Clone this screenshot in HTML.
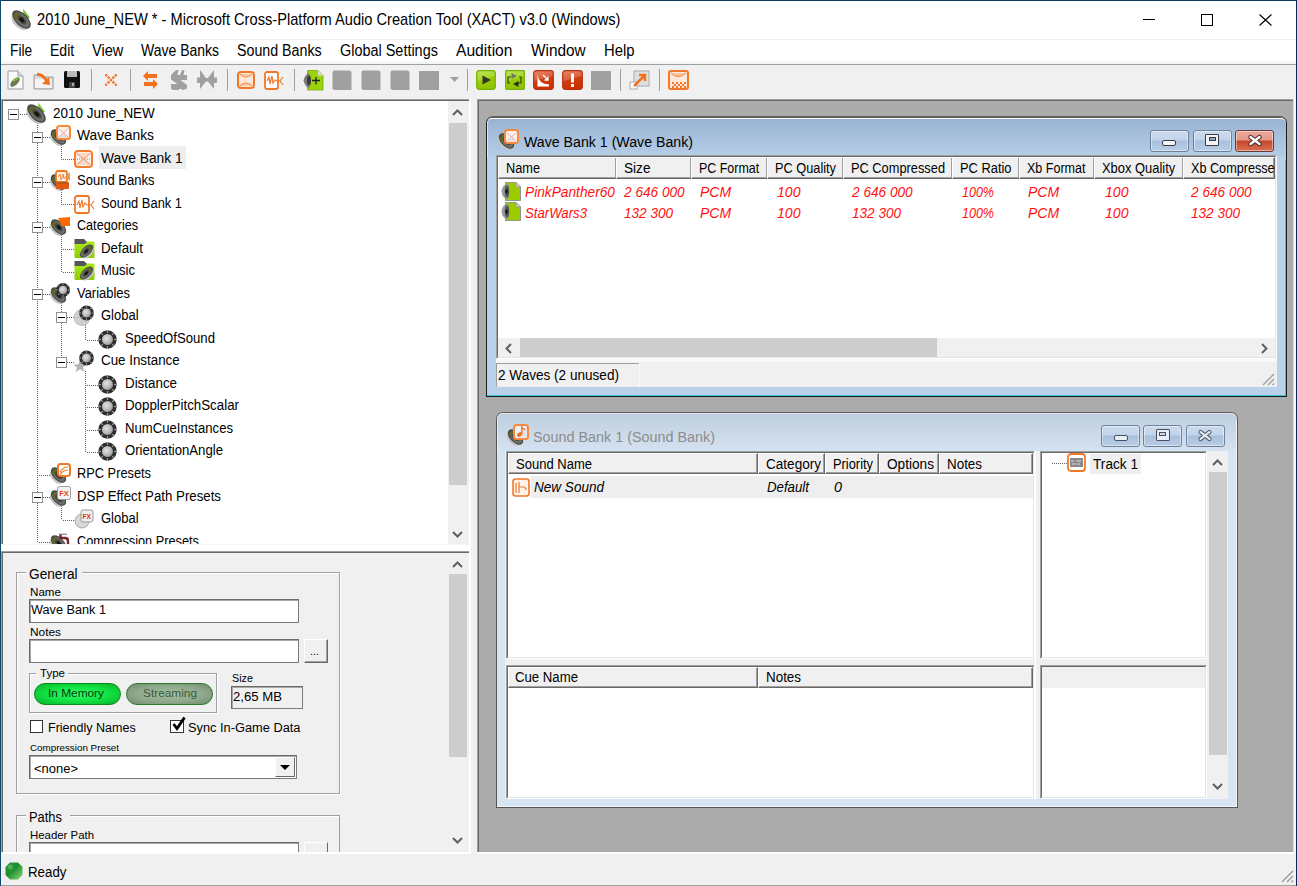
<!DOCTYPE html><html><head><meta charset="utf-8"><style>
*{margin:0;padding:0;box-sizing:border-box}
html,body{width:1297px;height:886px;overflow:hidden;background:#f0f0f0;font-family:"Liberation Sans",sans-serif;color:#000}
.a{position:absolute}
.t{position:absolute;white-space:pre;line-height:1;transform-origin:0 0}
svg{position:absolute;overflow:visible}
</style></head><body><div class="a" style="left:0px;top:0px;width:1297px;height:39px;background:#fff"></div>
<div class="a" style="left:0px;top:39px;width:1297px;height:1px;background:#f0f0f0"></div>
<div class="a" style="left:0px;top:40px;width:1297px;height:21px;background:#fff"></div>
<div class="a" style="left:0px;top:61px;width:1297px;height:3px;background:linear-gradient(#fbfbfb,#f0f0f0)"></div>
<div class="a" style="left:0px;top:64px;width:1297px;height:1px;background:#a0a0a0"></div>
<div class="a" style="left:0px;top:65px;width:1297px;height:34px;background:#f0f0f0"></div>
<div class="a" style="left:0px;top:0px;width:1297px;height:1px;background:#0f3a5e"></div>
<div class="a" style="left:0px;top:0px;width:1px;height:886px;background:#0f4a6e"></div>
<div class="a" style="left:1296px;top:0px;width:1px;height:886px;background:#0a2a5a"></div>
<svg style="left:11px;top:10px" width="20" height="20" viewBox="0 0 20 20" ><path d="M12.0 -1.424999999999999 L19.125 7.775 L12.8 8.925 Z" fill="#78c43a"/><g transform="rotate(-45 10.5 9.5)"><ellipse cx="7.71" cy="9.73" rx="5.89" ry="10.35" fill="#c4c4c4"/><ellipse cx="10.5" cy="9.5" rx="6.2" ry="11.5" fill="#4c4d48"/><ellipse cx="10.5" cy="10.075" rx="4.836" ry="9.200000000000001" fill="#6f706c"/><ellipse cx="9.879999999999999" cy="4.325" rx="3.4100000000000006" ry="3.68" fill="#65662e"/><ellipse cx="10.5" cy="10.075" rx="3.1" ry="5.75" fill="#4a4a46"/><ellipse cx="10.5" cy="10.075" rx="1.7360000000000002" ry="3.22" fill="#151510"/></g></svg>
<div class="t" style="left:36.7px;top:11.03px;font-size:16.2px;color:#000;transform:scaleX(0.9050);">2010 June_NEW * - Microsoft Cross-Platform Audio Creation Tool (XACT) v3.0 (Windows)</div>
<div class="a" style="left:1143px;top:19px;width:12px;height:1px;background:#000"></div>
<div class="a" style="left:1201px;top:14px;width:12px;height:12px;border:1px solid #000"></div>
<svg style="left:1259px;top:14px" width="13" height="12" viewBox="0 0 13 12" ><path d="M0.5 0.5 L12.5 11.5 M12.5 0.5 L0.5 11.5" stroke="#000" stroke-width="1.1" fill="none"/></svg>
<div class="t" style="left:10.2px;top:43.20px;font-size:16px;color:#000;transform:scaleX(0.8572);">File</div>
<div class="t" style="left:50.1px;top:43.20px;font-size:16px;color:#000;transform:scaleX(0.8775);">Edit</div>
<div class="t" style="left:92.1px;top:43.20px;font-size:16px;color:#000;transform:scaleX(0.9101);">View</div>
<div class="t" style="left:141.2px;top:43.20px;font-size:16px;color:#000;transform:scaleX(0.8754);">Wave Banks</div>
<div class="t" style="left:237.2px;top:43.20px;font-size:16px;color:#000;transform:scaleX(0.8898);">Sound Banks</div>
<div class="t" style="left:340.4px;top:43.20px;font-size:16px;color:#000;transform:scaleX(0.9022);">Global Settings</div>
<div class="t" style="left:456.1px;top:43.20px;font-size:16px;color:#000;transform:scaleX(0.9770);">Audition</div>
<div class="t" style="left:531.2px;top:43.20px;font-size:16px;color:#000;transform:scaleX(0.9612);">Window</div>
<div class="t" style="left:603.7px;top:43.20px;font-size:16px;color:#000;transform:scaleX(0.9269);">Help</div>
<svg style="left:7px;top:70px" width="17" height="20" viewBox="0 0 17 20" ><path d="M1 1 L11 1 L16 6 L16 19 L1 19 Z" fill="#fafafa" stroke="#9a9a9a"/><path d="M11 1 L11 6 L16 6" fill="#ddd" stroke="#9a9a9a"/><ellipse cx="8" cy="12" rx="3" ry="6" transform="rotate(45 8 12)" fill="#6a7a5a"/><path d="M6 11 L11 8" stroke="#7cc43a" stroke-width="2"/></svg>
<svg style="left:33px;top:70px" width="21" height="20" viewBox="0 0 21 20" ><path d="M1 5 L9 5 L11 7 L20 7 L20 19 L1 19 Z" fill="#ddd" stroke="#888" stroke-width="0.8"/><path d="M2 9 L19 9 L19 18 L2 18 Z" fill="#f4f4f4"/><path d="M4 3 Q10 2 14 9 L16 7 L17 15 L9 14 L12 11 Q9 6 4 6 Z" fill="#f07020"/></svg>
<svg style="left:63px;top:70px" width="18" height="19" viewBox="0 0 18 19" ><rect x="1" y="1" width="16" height="17" rx="1.5" fill="#111"/><rect x="4" y="1" width="10" height="6" fill="#bbb"/><rect x="6" y="12" width="6" height="6" fill="#444"/><rect x="9" y="13" width="2" height="3" fill="#aaa"/></svg>
<div class="a" style="left:91px;top:69px;width:1px;height:22px;background:#a0a0a0"></div>
<div class="a" style="left:130px;top:69px;width:1px;height:22px;background:#a0a0a0"></div>
<div class="a" style="left:227px;top:69px;width:1px;height:22px;background:#a0a0a0"></div>
<div class="a" style="left:294px;top:69px;width:1px;height:22px;background:#a0a0a0"></div>
<div class="a" style="left:467px;top:69px;width:1px;height:22px;background:#a0a0a0"></div>
<div class="a" style="left:620px;top:69px;width:1px;height:22px;background:#a0a0a0"></div>
<div class="a" style="left:659px;top:69px;width:1px;height:22px;background:#a0a0a0"></div>
<svg style="left:104px;top:73px" width="14" height="14" viewBox="0 0 14 14" ><path d="M1.5 1.5 L12.5 12.5 M12.5 1.5 L1.5 12.5" stroke="#f07020" stroke-width="2.4" stroke-dasharray="2.2 1.2"/></svg>
<svg style="left:142px;top:70px" width="17" height="20" viewBox="0 0 17 20" ><path d="M1 6 L6 1 L6 4 L15 4 L15 8 L6 8 L6 11 Z" fill="#f07020"/><path d="M16 14 L11 9 L11 12 L2 12 L2 16 L11 16 L11 19 Z" fill="#f07020"/></svg>
<svg style="left:171px;top:70px" width="16" height="20" viewBox="0 0 16 20" ><path d="M0 5 L5 0 L7.5 0 L6.5 5 L9 5 L11 0 L13.5 0.5 L12.5 5 L16 5 L16 10 L9.5 10 L16 15 L16 18.5 L12 20 L9 18.5 L7.5 20 L1.5 20 L0 18.5 L0 14 L6.5 14 L0 9.5 Z" fill="#a0a0a0"/></svg>
<svg style="left:197px;top:70px" width="20" height="19" viewBox="0 0 20 19" ><path d="M3 0 L9 8 L11 8 L17 0 L17 7.5 L20 7.5 L20 13 L17 13 L17 19 L11 11.5 L9 11.5 L3 19 L3 13 L0 13 L0 7.5 L3 7.5 Z" fill="#a0a0a0"/></svg>
<svg style="left:237px;top:71px" width="18" height="18" viewBox="0 0 18 18" ><rect x="1" y="1" width="16" height="16" rx="3" fill="#fde7d8" stroke="#f07828" stroke-width="2"/><path d="M3 3 Q9 9 15 3 M3 15 Q9 9 15 15" stroke="#f3a070" stroke-width="1.2" fill="#f8c8a8"/></svg>
<svg style="left:264px;top:71px" width="21" height="19" viewBox="0 0 21 19" ><rect x="1" y="1" width="13" height="17" rx="2" fill="#fff" stroke="#f07828" stroke-width="1.8"/><path d="M3 10 L5 6 L6 13 L8 5 L9 12 L11 9 L14 10 L16 10 M16 10 L19 6 M16 10 L19 14" stroke="#f07828" stroke-width="1.2" fill="none"/></svg>
<svg style="left:303px;top:70px" width="21" height="21" viewBox="0 0 21 21" ><path d="M4.5 0.5 L15 0.5 L20 5.5 L20 20 L4.5 20 Z" fill="#9bd40c" stroke="#7aa80a" stroke-width="0.8"/><path d="M15 0.5 L15 5.5 L20 5.5 Z" fill="#dcdcdc"/><path d="M0.5 10.5 Q2 4 6.5 3 L6.5 18 Q2 17 0.5 10.5 Z" fill="#7a7a7a"/><ellipse cx="6" cy="10.5" rx="2" ry="5" fill="#3a3a3a"/><path d="M9 10.5 L17 10.5 M13 7 L13 14.5" stroke="#222" stroke-width="1.3"/></svg>
<svg style="left:332px;top:70px" width="20" height="20" viewBox="0 0 20 20" ><path d="M1.5 0.5 L18 0.5 L19.5 2 L19.5 20 L2 20 L0.5 18.5 L0.5 2 Z" fill="#a0a0a0"/></svg>
<svg style="left:361px;top:70px" width="20" height="20" viewBox="0 0 20 20" ><path d="M1.5 0.5 L18 0.5 L19.5 2 L19.5 20 L2 20 L0.5 18.5 L0.5 2 Z" fill="#a0a0a0"/></svg>
<svg style="left:390px;top:70px" width="20" height="20" viewBox="0 0 20 20" ><path d="M1.5 0.5 L18 0.5 L19.5 2 L19.5 20 L2 20 L0.5 18.5 L0.5 2 Z" fill="#a0a0a0"/></svg>
<div class="a" style="left:419px;top:71px;width:20px;height:19px;background:#a0a0a0"></div>
<svg style="left:450px;top:77px" width="9" height="5" viewBox="0 0 9 5" ><path d="M0 0 L9 0 L4.5 5 Z" fill="#a0a0a0"/></svg>
<svg style="left:476px;top:70px" width="20" height="20" viewBox="0 0 20 20" ><defs><linearGradient id="gg" x1="0" y1="0" x2="0.3" y2="1"><stop offset="0" stop-color="#bde35a"/><stop offset="0.5" stop-color="#a8d82c"/><stop offset="0.55" stop-color="#98cc08"/><stop offset="1" stop-color="#90c400"/></linearGradient><linearGradient id="rg" x1="0" y1="0" x2="0.3" y2="1"><stop offset="0" stop-color="#e88868"/><stop offset="0.5" stop-color="#dc6040"/><stop offset="0.55" stop-color="#d03c10"/><stop offset="1" stop-color="#cc3300"/></linearGradient></defs><rect x="0.7" y="0.7" width="18.6" height="18.6" rx="2.5" fill="url(#gg)" stroke="#74b000" stroke-width="1.2"/><path d="M6.5 5.5 L15 10 L6.5 14.5 Z" fill="#333822"/></svg>
<svg style="left:505px;top:70px" width="20" height="20" viewBox="0 0 20 20" ><rect x="0.7" y="0.7" width="18.6" height="18.6" rx="0.8" fill="url(#gg)" stroke="#74b000" stroke-width="1.2"/><path d="M5 13 L3 13 L3 7 L6 7 M14 7 L16 7 L16 13 L13 13" stroke="#3a4020" stroke-width="1.2" fill="none"/><path d="M6.5 3 L12 6 L6.5 9 Z" fill="#707858"/><path d="M13.5 11 L8 14 L13.5 17 Z" fill="#2a3018"/></svg>
<svg style="left:533px;top:70px" width="21" height="20" viewBox="0 0 21 20" ><rect x="0.7" y="0.7" width="19.6" height="18.6" rx="2.5" fill="url(#rg)" stroke="#b83010" stroke-width="1.2"/><path d="M4.5 4.5 Q5.5 14 16 14.5 L16 16.5 L4.5 16.5 Z" fill="#fff"/><path d="M10 5 L15 10 M15 6.5 L15 10 L11.5 10" stroke="#fff" stroke-width="1.4" fill="none"/></svg>
<svg style="left:562px;top:70px" width="21" height="20" viewBox="0 0 21 20" ><rect x="0.7" y="0.7" width="19.6" height="18.6" rx="2.5" fill="url(#rg)" stroke="#b83010" stroke-width="1.2"/><rect x="9" y="3.5" width="3" height="9" fill="#fff"/><rect x="9" y="14" width="3" height="3" fill="#fff"/></svg>
<div class="a" style="left:591px;top:71px;width:20px;height:19px;background:#a0a0a0"></div>
<svg style="left:629px;top:70px" width="21" height="20" viewBox="0 0 21 20" ><rect x="5" y="1" width="15" height="15" fill="#e0e0e0" stroke="#aaa"/><rect x="1" y="12" width="7" height="7" fill="#fff" stroke="#aaa"/><path d="M5 16 L16 5 M10 5 L16 5 L16 11" stroke="#f07020" stroke-width="2.5" fill="none"/></svg>
<svg style="left:668px;top:70px" width="21" height="20" viewBox="0 0 21 20" ><rect x="1" y="1" width="19" height="18" rx="2" fill="#fde7d8" stroke="#f07828" stroke-width="2"/><path d="M3 3 Q10 10 18 3" stroke="#f3a070" stroke-width="1.2" fill="#f8c8a8"/><path d="M4 12 h2 v2 h-2z M8 12 h2 v2 h-2z M12 12 h2 v2 h-2z M16 12 h2 v2 h-2z M6 14 h2 v2 h-2z M10 14 h2 v2 h-2z M14 14 h2 v2 h-2z M4 16 h2 v2 h-2z M8 16 h2 v2 h-2z M12 16 h2 v2 h-2z M16 16 h2 v2 h-2z" fill="#f07828"/></svg>
<div class="a" style="left:1px;top:99px;width:470px;height:1px;background:#a0a0a0"></div>
<div class="a" style="left:1px;top:99px;width:1px;height:445px;background:#a0a0a0"></div>
<div class="a" style="left:2px;top:100px;width:469px;height:1px;background:#696969"></div>
<div class="a" style="left:2px;top:100px;width:1px;height:444px;background:#696969"></div>
<div class="a" style="left:3px;top:101px;width:445px;height:444px;background:#fff"></div>
<div class="a" style="left:448px;top:101px;width:21px;height:443px;background:#f0f0f0"></div>
<div class="a" style="left:449px;top:123px;width:18px;height:362px;background:#cdcdcd"></div>
<svg style="left:452px;top:109px" width="11" height="7" viewBox="0 0 11 7" ><path d="M1 6 L5.5 1.5 L10 6" stroke="#606060" stroke-width="2" fill="none"/></svg>
<svg style="left:452px;top:531px" width="11" height="7" viewBox="0 0 11 7" ><path d="M1 1 L5.5 5.5 L10 1" stroke="#606060" stroke-width="2" fill="none"/></svg>
<div class="a" style="left:469px;top:99px;width:2px;height:447px;background:#fff"></div>
<div class="a" style="left:1px;top:544px;width:470px;height:7px;background:#fff"></div>
<div class="a" style="left:37px;top:123px;width:1px;height:420px;background:repeating-linear-gradient(#606060 0 1px,transparent 1px 2px)"></div>
<div class="a" style="left:61px;top:145px;width:1px;height:15px;background:repeating-linear-gradient(#606060 0 1px,transparent 1px 2px)"></div>
<div class="a" style="left:61px;top:190px;width:1px;height:15px;background:repeating-linear-gradient(#606060 0 1px,transparent 1px 2px)"></div>
<div class="a" style="left:61px;top:235px;width:1px;height:37px;background:repeating-linear-gradient(#606060 0 1px,transparent 1px 2px)"></div>
<div class="a" style="left:61px;top:303px;width:1px;height:60px;background:repeating-linear-gradient(#606060 0 1px,transparent 1px 2px)"></div>
<div class="a" style="left:61px;top:506px;width:1px;height:14px;background:repeating-linear-gradient(#606060 0 1px,transparent 1px 2px)"></div>
<div class="a" style="left:85px;top:325px;width:1px;height:15px;background:repeating-linear-gradient(#606060 0 1px,transparent 1px 2px)"></div>
<div class="a" style="left:85px;top:371px;width:1px;height:82px;background:repeating-linear-gradient(#606060 0 1px,transparent 1px 2px)"></div>
<div class="a" style="left:20px;top:114px;width:7px;height:1px;background:repeating-linear-gradient(90deg,#606060 0 1px,transparent 1px 2px)"></div>
<div class="a" style="left:8px;top:109px;width:11px;height:11px;border:1px solid #919191;background:#fff"></div>
<div class="a" style="left:10px;top:114px;width:7px;height:1px;background:#000"></div>
<svg style="left:26px;top:104px" width="20" height="20" viewBox="0 0 20 20" ><path d="M12.0 -1.424999999999999 L19.125 7.775 L12.8 8.925 Z" fill="#78c43a"/><g transform="rotate(-45 10.5 9.5)"><ellipse cx="7.71" cy="9.73" rx="5.89" ry="10.35" fill="#c4c4c4"/><ellipse cx="10.5" cy="9.5" rx="6.2" ry="11.5" fill="#4c4d48"/><ellipse cx="10.5" cy="10.075" rx="4.836" ry="9.200000000000001" fill="#6f706c"/><ellipse cx="9.879999999999999" cy="4.325" rx="3.4100000000000006" ry="3.68" fill="#65662e"/><ellipse cx="10.5" cy="10.075" rx="3.1" ry="5.75" fill="#4a4a46"/><ellipse cx="10.5" cy="10.075" rx="1.7360000000000002" ry="3.22" fill="#151510"/></g></svg>
<div class="t" style="left:53px;top:105.50px;font-size:14px;color:#000;transform:scaleX(0.9618);">2010 June_NEW</div>
<div class="a" style="left:39px;top:137px;width:11px;height:1px;background:repeating-linear-gradient(90deg,#606060 0 1px,transparent 1px 2px)"></div>
<div class="a" style="left:32px;top:132px;width:11px;height:11px;border:1px solid #919191;background:#fff"></div>
<div class="a" style="left:34px;top:137px;width:7px;height:1px;background:#000"></div>
<svg style="left:50px;top:128px" width="18" height="18" viewBox="0 0 18 18" ><g transform="rotate(-45 8.5 9)"><ellipse cx="6.07" cy="9.188" rx="5.13" ry="8.46" fill="#c4c4c4"/><ellipse cx="8.5" cy="9" rx="5.4" ry="9.4" fill="#4c4d48"/><ellipse cx="8.5" cy="9.47" rx="4.212000000000001" ry="7.5200000000000005" fill="#6f706c"/><ellipse cx="7.96" cy="4.77" rx="2.9700000000000006" ry="3.008" fill="#65662e"/><ellipse cx="8.5" cy="9.47" rx="2.7" ry="4.7" fill="#4a4a46"/><ellipse cx="8.5" cy="9.47" rx="1.5120000000000002" ry="2.6320000000000006" fill="#151510"/></g></svg>
<svg style="left:56px;top:125px" width="15" height="15" viewBox="0 0 15 15" ><rect x="1" y="1" width="13" height="13" rx="2.5" fill="#fdf3ee" stroke="#f7893a" stroke-width="2"/><path d="M3 3.5 L7.5 8 L12 3.5 M3 12 L7.5 8 L12 12" stroke="#e8a0a0" stroke-width="1" fill="none"/><path d="M3 12.5 Q7.5 7 12 12.5 Z" fill="#dedede"/></svg>
<div class="t" style="left:77px;top:128.03px;font-size:14px;color:#000;transform:scaleX(0.9862);">Wave Banks</div>
<div class="a" style="left:63px;top:159px;width:11px;height:1px;background:repeating-linear-gradient(90deg,#606060 0 1px,transparent 1px 2px)"></div>
<svg style="left:74px;top:150px" width="19" height="18" viewBox="0 0 19 18" ><rect x="1" y="1" width="17" height="16" rx="3" fill="#fdf1ea" stroke="#f57f2f" stroke-width="2"/><path d="M3 3.5 L9.5 9.0 L16 3.5 M3 14.5 L9.5 9.0 L16 14.5" stroke="#f1a47c" stroke-width="1.2" fill="none"/><path d="M3 9.0 L16 9.0" stroke="#f3a070" stroke-width="1.4" stroke-dasharray="1 1"/><path d="M3 3 L9.5 8.0 L16 3 Z M3 15 L9.5 10.0 L16 15 Z" fill="#f8d0bc" opacity="0.7"/></svg>
<div class="a" style="left:99px;top:146px;width:87px;height:23px;background:#eeeeee"></div>
<div class="t" style="left:101px;top:150.56px;font-size:14px;color:#000;transform:scaleX(0.9873);">Wave Bank 1</div>
<div class="a" style="left:39px;top:182px;width:11px;height:1px;background:repeating-linear-gradient(90deg,#606060 0 1px,transparent 1px 2px)"></div>
<div class="a" style="left:32px;top:177px;width:11px;height:11px;border:1px solid #919191;background:#fff"></div>
<div class="a" style="left:34px;top:182px;width:7px;height:1px;background:#000"></div>
<svg style="left:50px;top:173px" width="18" height="18" viewBox="0 0 18 18" ><g transform="rotate(-45 8.5 9)"><ellipse cx="6.07" cy="9.188" rx="5.13" ry="8.46" fill="#c4c4c4"/><ellipse cx="8.5" cy="9" rx="5.4" ry="9.4" fill="#4c4d48"/><ellipse cx="8.5" cy="9.47" rx="4.212000000000001" ry="7.5200000000000005" fill="#6f706c"/><ellipse cx="7.96" cy="4.77" rx="2.9700000000000006" ry="3.008" fill="#65662e"/><ellipse cx="8.5" cy="9.47" rx="2.7" ry="4.7" fill="#4a4a46"/><ellipse cx="8.5" cy="9.47" rx="1.5120000000000002" ry="2.6320000000000006" fill="#151510"/></g></svg>
<svg style="left:55px;top:170px" width="16" height="20" viewBox="0 0 16 20" ><rect x="1" y="1" width="11" height="11" rx="2" fill="#fff4ec" stroke="#f47a20" stroke-width="1.8"/><path d="M3 7 L5 4 L6 10 L8 4 L9 9 L11 6" stroke="#f07828" stroke-width="0.9" fill="none"/><path d="M12 5 L15 2 L15 11 L12 8 Z" fill="#e89850"/><rect x="1" y="12" width="13" height="7" rx="1" fill="#e35a10"/><path d="M2 13 h11" stroke="#8a5a3a" stroke-width="1"/></svg>
<div class="t" style="left:77px;top:173.09px;font-size:14px;color:#000;transform:scaleX(0.9304);">Sound Banks</div>
<div class="a" style="left:63px;top:204px;width:11px;height:1px;background:repeating-linear-gradient(90deg,#606060 0 1px,transparent 1px 2px)"></div>
<svg style="left:74px;top:195px" width="22" height="19" viewBox="0 0 22 19" ><rect x="1" y="1" width="14" height="17" rx="2" fill="#fff" stroke="#f07828" stroke-width="1.8"/><path d="M3 10 L5 6 L6 13 L8 5 L9 12 L11 8 L13 10 L17 10 M17 10 L20 6 M17 10 L20 14" stroke="#f07828" stroke-width="1.1" fill="none"/></svg>
<div class="t" style="left:101px;top:195.62px;font-size:14px;color:#000;transform:scaleX(0.9208);">Sound Bank 1</div>
<div class="a" style="left:39px;top:227px;width:11px;height:1px;background:repeating-linear-gradient(90deg,#606060 0 1px,transparent 1px 2px)"></div>
<div class="a" style="left:32px;top:222px;width:11px;height:11px;border:1px solid #919191;background:#fff"></div>
<div class="a" style="left:34px;top:227px;width:7px;height:1px;background:#000"></div>
<svg style="left:50px;top:218px" width="18" height="18" viewBox="0 0 18 18" ><g transform="rotate(-45 8.5 9)"><ellipse cx="6.07" cy="9.188" rx="5.13" ry="8.46" fill="#c4c4c4"/><ellipse cx="8.5" cy="9" rx="5.4" ry="9.4" fill="#4c4d48"/><ellipse cx="8.5" cy="9.47" rx="4.212000000000001" ry="7.5200000000000005" fill="#6f706c"/><ellipse cx="7.96" cy="4.77" rx="2.9700000000000006" ry="3.008" fill="#65662e"/><ellipse cx="8.5" cy="9.47" rx="2.7" ry="4.7" fill="#4a4a46"/><ellipse cx="8.5" cy="9.47" rx="1.5120000000000002" ry="2.6320000000000006" fill="#151510"/></g></svg>
<svg style="left:58px;top:216px" width="13" height="12" viewBox="0 0 13 12" ><path d="M0 2 L12 1 L12 10 L4 10 Z" fill="#ff6a00"/></svg>
<div class="t" style="left:77px;top:218.15px;font-size:14px;color:#000;transform:scaleX(0.9010);">Categories</div>
<div class="a" style="left:63px;top:249px;width:11px;height:1px;background:repeating-linear-gradient(90deg,#606060 0 1px,transparent 1px 2px)"></div>
<svg style="left:74px;top:238px" width="21" height="21" viewBox="0 0 21 21" ><defs><linearGradient id="fg" x1="0" y1="0" x2="0" y2="1"><stop offset="0" stop-color="#a8ea18"/><stop offset="1" stop-color="#90cc06"/></linearGradient></defs><rect x="0.5" y="3.5" width="20" height="16.5" rx="1" fill="url(#fg)"/><path d="M0.5 1 L10 1 L13 4 L10.5 6 L0.5 6 Z" fill="#55555d"/><g transform="rotate(45 12.5 13)"><ellipse cx="14.48" cy="13.164" rx="4.18" ry="7.38" fill="#c4c4c4"/><ellipse cx="12.5" cy="13" rx="4.4" ry="8.2" fill="#4c4d48"/><ellipse cx="12.5" cy="13.41" rx="3.4320000000000004" ry="6.56" fill="#6f706c"/><ellipse cx="12.06" cy="9.31" rx="2.4200000000000004" ry="2.6239999999999997" fill="#65662e"/><ellipse cx="12.5" cy="13.41" rx="2.2" ry="4.1" fill="#4a4a46"/><ellipse cx="12.5" cy="13.41" rx="1.2320000000000002" ry="2.296" fill="#151510"/></g></svg>
<div class="t" style="left:101px;top:240.68px;font-size:14px;color:#000;transform:scaleX(0.9468);">Default</div>
<div class="a" style="left:63px;top:272px;width:11px;height:1px;background:repeating-linear-gradient(90deg,#606060 0 1px,transparent 1px 2px)"></div>
<svg style="left:74px;top:260px" width="21" height="21" viewBox="0 0 21 21" ><defs><linearGradient id="fg" x1="0" y1="0" x2="0" y2="1"><stop offset="0" stop-color="#a8ea18"/><stop offset="1" stop-color="#90cc06"/></linearGradient></defs><rect x="0.5" y="3.5" width="20" height="16.5" rx="1" fill="url(#fg)"/><path d="M0.5 1 L10 1 L13 4 L10.5 6 L0.5 6 Z" fill="#55555d"/><g transform="rotate(45 12.5 13)"><ellipse cx="14.48" cy="13.164" rx="4.18" ry="7.38" fill="#c4c4c4"/><ellipse cx="12.5" cy="13" rx="4.4" ry="8.2" fill="#4c4d48"/><ellipse cx="12.5" cy="13.41" rx="3.4320000000000004" ry="6.56" fill="#6f706c"/><ellipse cx="12.06" cy="9.31" rx="2.4200000000000004" ry="2.6239999999999997" fill="#65662e"/><ellipse cx="12.5" cy="13.41" rx="2.2" ry="4.1" fill="#4a4a46"/><ellipse cx="12.5" cy="13.41" rx="1.2320000000000002" ry="2.296" fill="#151510"/></g></svg>
<div class="t" style="left:101px;top:263.21px;font-size:14px;color:#000;transform:scaleX(0.9299);">Music</div>
<div class="a" style="left:39px;top:294px;width:11px;height:1px;background:repeating-linear-gradient(90deg,#606060 0 1px,transparent 1px 2px)"></div>
<div class="a" style="left:32px;top:289px;width:11px;height:11px;border:1px solid #919191;background:#fff"></div>
<div class="a" style="left:34px;top:294px;width:7px;height:1px;background:#000"></div>
<svg style="left:50px;top:286px" width="18" height="18" viewBox="0 0 18 18" ><g transform="rotate(-45 8.5 9)"><ellipse cx="6.07" cy="9.188" rx="5.13" ry="8.46" fill="#c4c4c4"/><ellipse cx="8.5" cy="9" rx="5.4" ry="9.4" fill="#4c4d48"/><ellipse cx="8.5" cy="9.47" rx="4.212000000000001" ry="7.5200000000000005" fill="#6f706c"/><ellipse cx="7.96" cy="4.77" rx="2.9700000000000006" ry="3.008" fill="#65662e"/><ellipse cx="8.5" cy="9.47" rx="2.7" ry="4.7" fill="#4a4a46"/><ellipse cx="8.5" cy="9.47" rx="1.5120000000000002" ry="2.6320000000000006" fill="#151510"/></g></svg>
<svg style="left:55px;top:282px" width="16" height="16" viewBox="0 0 16 16" ><g transform="translate(8 8) scale(0.7777777777777778)"><defs><radialGradient id="kg8080" cx="0.4" cy="0.4" r="0.7"><stop offset="0" stop-color="#e4e4e4"/><stop offset="0.7" stop-color="#b0b0b0"/><stop offset="1" stop-color="#707070"/></radialGradient></defs><circle r="9" fill="#2e2e2e"/><rect x="-0.6" y="-9" width="1.2" height="2.6" fill="#9a9a9a" transform="rotate(0)"/><rect x="-0.6" y="-9" width="1.2" height="2.6" fill="#9a9a9a" transform="rotate(45)"/><rect x="-0.6" y="-9" width="1.2" height="2.6" fill="#9a9a9a" transform="rotate(90)"/><rect x="-0.6" y="-9" width="1.2" height="2.6" fill="#9a9a9a" transform="rotate(135)"/><rect x="-0.6" y="-9" width="1.2" height="2.6" fill="#9a9a9a" transform="rotate(180)"/><rect x="-0.6" y="-9" width="1.2" height="2.6" fill="#9a9a9a" transform="rotate(225)"/><rect x="-0.6" y="-9" width="1.2" height="2.6" fill="#9a9a9a" transform="rotate(270)"/><rect x="-0.6" y="-9" width="1.2" height="2.6" fill="#9a9a9a" transform="rotate(315)"/><circle r="5.4" fill="url(#kg8080)"/></g></svg>
<div class="t" style="left:77px;top:285.74px;font-size:14px;color:#000;transform:scaleX(0.9245);">Variables</div>
<div class="a" style="left:63px;top:317px;width:11px;height:1px;background:repeating-linear-gradient(90deg,#606060 0 1px,transparent 1px 2px)"></div>
<div class="a" style="left:56px;top:312px;width:11px;height:11px;border:1px solid #919191;background:#fff"></div>
<div class="a" style="left:58px;top:317px;width:7px;height:1px;background:#000"></div>
<svg style="left:74px;top:306px" width="20" height="20" viewBox="0 0 20 20" ><circle cx="8" cy="11.5" r="8" fill="#d0d0d0" stroke="#b8b8b8" stroke-width="0.8"/><path d="M0.5 11.5 h15 M8 3.5 v16" stroke="#bcbcbc" stroke-width="0.7"/><g transform="translate(12.5 7) scale(0.8222222222222223)"><defs><radialGradient id="kg12570" cx="0.4" cy="0.4" r="0.7"><stop offset="0" stop-color="#e4e4e4"/><stop offset="0.7" stop-color="#b0b0b0"/><stop offset="1" stop-color="#707070"/></radialGradient></defs><circle r="9" fill="#2e2e2e"/><rect x="-0.6" y="-9" width="1.2" height="2.6" fill="#9a9a9a" transform="rotate(0)"/><rect x="-0.6" y="-9" width="1.2" height="2.6" fill="#9a9a9a" transform="rotate(45)"/><rect x="-0.6" y="-9" width="1.2" height="2.6" fill="#9a9a9a" transform="rotate(90)"/><rect x="-0.6" y="-9" width="1.2" height="2.6" fill="#9a9a9a" transform="rotate(135)"/><rect x="-0.6" y="-9" width="1.2" height="2.6" fill="#9a9a9a" transform="rotate(180)"/><rect x="-0.6" y="-9" width="1.2" height="2.6" fill="#9a9a9a" transform="rotate(225)"/><rect x="-0.6" y="-9" width="1.2" height="2.6" fill="#9a9a9a" transform="rotate(270)"/><rect x="-0.6" y="-9" width="1.2" height="2.6" fill="#9a9a9a" transform="rotate(315)"/><circle r="5.4" fill="url(#kg12570)"/></g></svg>
<div class="t" style="left:101px;top:308.27px;font-size:14px;color:#000;transform:scaleX(0.9291);">Global</div>
<div class="a" style="left:87px;top:340px;width:11px;height:1px;background:repeating-linear-gradient(90deg,#606060 0 1px,transparent 1px 2px)"></div>
<svg style="left:98px;top:330px" width="19" height="19" viewBox="0 0 19 19" ><g transform="translate(9.5 9.5) scale(1.0222222222222221)"><defs><radialGradient id="kg9595" cx="0.4" cy="0.4" r="0.7"><stop offset="0" stop-color="#e4e4e4"/><stop offset="0.7" stop-color="#b0b0b0"/><stop offset="1" stop-color="#707070"/></radialGradient></defs><circle r="9" fill="#2e2e2e"/><rect x="-0.6" y="-9" width="1.2" height="2.6" fill="#9a9a9a" transform="rotate(0)"/><rect x="-0.6" y="-9" width="1.2" height="2.6" fill="#9a9a9a" transform="rotate(45)"/><rect x="-0.6" y="-9" width="1.2" height="2.6" fill="#9a9a9a" transform="rotate(90)"/><rect x="-0.6" y="-9" width="1.2" height="2.6" fill="#9a9a9a" transform="rotate(135)"/><rect x="-0.6" y="-9" width="1.2" height="2.6" fill="#9a9a9a" transform="rotate(180)"/><rect x="-0.6" y="-9" width="1.2" height="2.6" fill="#9a9a9a" transform="rotate(225)"/><rect x="-0.6" y="-9" width="1.2" height="2.6" fill="#9a9a9a" transform="rotate(270)"/><rect x="-0.6" y="-9" width="1.2" height="2.6" fill="#9a9a9a" transform="rotate(315)"/><circle r="5.4" fill="url(#kg9595)"/></g></svg>
<div class="t" style="left:125px;top:330.80px;font-size:14px;color:#000;transform:scaleX(0.9399);">SpeedOfSound</div>
<div class="a" style="left:63px;top:362px;width:11px;height:1px;background:repeating-linear-gradient(90deg,#606060 0 1px,transparent 1px 2px)"></div>
<div class="a" style="left:56px;top:357px;width:11px;height:11px;border:1px solid #919191;background:#fff"></div>
<div class="a" style="left:58px;top:362px;width:7px;height:1px;background:#000"></div>
<svg style="left:74px;top:351px" width="20" height="20" viewBox="0 0 20 20" ><path d="M6 9 L8 13.5 L12.5 13.5 L9 16.5 L10.5 21 L6 18.3 L1.5 21 L3 16.5 L-0.5 13.5 L4 13.5 Z" fill="#b4b4b4"/><g transform="translate(12.5 7) scale(0.8222222222222223)"><defs><radialGradient id="kg12570" cx="0.4" cy="0.4" r="0.7"><stop offset="0" stop-color="#e4e4e4"/><stop offset="0.7" stop-color="#b0b0b0"/><stop offset="1" stop-color="#707070"/></radialGradient></defs><circle r="9" fill="#2e2e2e"/><rect x="-0.6" y="-9" width="1.2" height="2.6" fill="#9a9a9a" transform="rotate(0)"/><rect x="-0.6" y="-9" width="1.2" height="2.6" fill="#9a9a9a" transform="rotate(45)"/><rect x="-0.6" y="-9" width="1.2" height="2.6" fill="#9a9a9a" transform="rotate(90)"/><rect x="-0.6" y="-9" width="1.2" height="2.6" fill="#9a9a9a" transform="rotate(135)"/><rect x="-0.6" y="-9" width="1.2" height="2.6" fill="#9a9a9a" transform="rotate(180)"/><rect x="-0.6" y="-9" width="1.2" height="2.6" fill="#9a9a9a" transform="rotate(225)"/><rect x="-0.6" y="-9" width="1.2" height="2.6" fill="#9a9a9a" transform="rotate(270)"/><rect x="-0.6" y="-9" width="1.2" height="2.6" fill="#9a9a9a" transform="rotate(315)"/><circle r="5.4" fill="url(#kg12570)"/></g></svg>
<div class="t" style="left:101px;top:353.33px;font-size:14px;color:#000;transform:scaleX(0.9539);">Cue Instance</div>
<div class="a" style="left:87px;top:385px;width:11px;height:1px;background:repeating-linear-gradient(90deg,#606060 0 1px,transparent 1px 2px)"></div>
<svg style="left:98px;top:375px" width="19" height="19" viewBox="0 0 19 19" ><g transform="translate(9.5 9.5) scale(1.0222222222222221)"><defs><radialGradient id="kg9595" cx="0.4" cy="0.4" r="0.7"><stop offset="0" stop-color="#e4e4e4"/><stop offset="0.7" stop-color="#b0b0b0"/><stop offset="1" stop-color="#707070"/></radialGradient></defs><circle r="9" fill="#2e2e2e"/><rect x="-0.6" y="-9" width="1.2" height="2.6" fill="#9a9a9a" transform="rotate(0)"/><rect x="-0.6" y="-9" width="1.2" height="2.6" fill="#9a9a9a" transform="rotate(45)"/><rect x="-0.6" y="-9" width="1.2" height="2.6" fill="#9a9a9a" transform="rotate(90)"/><rect x="-0.6" y="-9" width="1.2" height="2.6" fill="#9a9a9a" transform="rotate(135)"/><rect x="-0.6" y="-9" width="1.2" height="2.6" fill="#9a9a9a" transform="rotate(180)"/><rect x="-0.6" y="-9" width="1.2" height="2.6" fill="#9a9a9a" transform="rotate(225)"/><rect x="-0.6" y="-9" width="1.2" height="2.6" fill="#9a9a9a" transform="rotate(270)"/><rect x="-0.6" y="-9" width="1.2" height="2.6" fill="#9a9a9a" transform="rotate(315)"/><circle r="5.4" fill="url(#kg9595)"/></g></svg>
<div class="t" style="left:125px;top:375.86px;font-size:14px;color:#000;transform:scaleX(0.9547);">Distance</div>
<div class="a" style="left:87px;top:407px;width:11px;height:1px;background:repeating-linear-gradient(90deg,#606060 0 1px,transparent 1px 2px)"></div>
<svg style="left:98px;top:397px" width="19" height="19" viewBox="0 0 19 19" ><g transform="translate(9.5 9.5) scale(1.0222222222222221)"><defs><radialGradient id="kg9595" cx="0.4" cy="0.4" r="0.7"><stop offset="0" stop-color="#e4e4e4"/><stop offset="0.7" stop-color="#b0b0b0"/><stop offset="1" stop-color="#707070"/></radialGradient></defs><circle r="9" fill="#2e2e2e"/><rect x="-0.6" y="-9" width="1.2" height="2.6" fill="#9a9a9a" transform="rotate(0)"/><rect x="-0.6" y="-9" width="1.2" height="2.6" fill="#9a9a9a" transform="rotate(45)"/><rect x="-0.6" y="-9" width="1.2" height="2.6" fill="#9a9a9a" transform="rotate(90)"/><rect x="-0.6" y="-9" width="1.2" height="2.6" fill="#9a9a9a" transform="rotate(135)"/><rect x="-0.6" y="-9" width="1.2" height="2.6" fill="#9a9a9a" transform="rotate(180)"/><rect x="-0.6" y="-9" width="1.2" height="2.6" fill="#9a9a9a" transform="rotate(225)"/><rect x="-0.6" y="-9" width="1.2" height="2.6" fill="#9a9a9a" transform="rotate(270)"/><rect x="-0.6" y="-9" width="1.2" height="2.6" fill="#9a9a9a" transform="rotate(315)"/><circle r="5.4" fill="url(#kg9595)"/></g></svg>
<div class="t" style="left:125px;top:398.39px;font-size:14px;color:#000;transform:scaleX(0.9512);">DopplerPitchScalar</div>
<div class="a" style="left:87px;top:430px;width:11px;height:1px;background:repeating-linear-gradient(90deg,#606060 0 1px,transparent 1px 2px)"></div>
<svg style="left:98px;top:420px" width="19" height="19" viewBox="0 0 19 19" ><g transform="translate(9.5 9.5) scale(1.0222222222222221)"><defs><radialGradient id="kg9595" cx="0.4" cy="0.4" r="0.7"><stop offset="0" stop-color="#e4e4e4"/><stop offset="0.7" stop-color="#b0b0b0"/><stop offset="1" stop-color="#707070"/></radialGradient></defs><circle r="9" fill="#2e2e2e"/><rect x="-0.6" y="-9" width="1.2" height="2.6" fill="#9a9a9a" transform="rotate(0)"/><rect x="-0.6" y="-9" width="1.2" height="2.6" fill="#9a9a9a" transform="rotate(45)"/><rect x="-0.6" y="-9" width="1.2" height="2.6" fill="#9a9a9a" transform="rotate(90)"/><rect x="-0.6" y="-9" width="1.2" height="2.6" fill="#9a9a9a" transform="rotate(135)"/><rect x="-0.6" y="-9" width="1.2" height="2.6" fill="#9a9a9a" transform="rotate(180)"/><rect x="-0.6" y="-9" width="1.2" height="2.6" fill="#9a9a9a" transform="rotate(225)"/><rect x="-0.6" y="-9" width="1.2" height="2.6" fill="#9a9a9a" transform="rotate(270)"/><rect x="-0.6" y="-9" width="1.2" height="2.6" fill="#9a9a9a" transform="rotate(315)"/><circle r="5.4" fill="url(#kg9595)"/></g></svg>
<div class="t" style="left:125px;top:420.92px;font-size:14px;color:#000;transform:scaleX(0.9377);">NumCueInstances</div>
<div class="a" style="left:87px;top:452px;width:11px;height:1px;background:repeating-linear-gradient(90deg,#606060 0 1px,transparent 1px 2px)"></div>
<svg style="left:98px;top:442px" width="19" height="19" viewBox="0 0 19 19" ><g transform="translate(9.5 9.5) scale(1.0222222222222221)"><defs><radialGradient id="kg9595" cx="0.4" cy="0.4" r="0.7"><stop offset="0" stop-color="#e4e4e4"/><stop offset="0.7" stop-color="#b0b0b0"/><stop offset="1" stop-color="#707070"/></radialGradient></defs><circle r="9" fill="#2e2e2e"/><rect x="-0.6" y="-9" width="1.2" height="2.6" fill="#9a9a9a" transform="rotate(0)"/><rect x="-0.6" y="-9" width="1.2" height="2.6" fill="#9a9a9a" transform="rotate(45)"/><rect x="-0.6" y="-9" width="1.2" height="2.6" fill="#9a9a9a" transform="rotate(90)"/><rect x="-0.6" y="-9" width="1.2" height="2.6" fill="#9a9a9a" transform="rotate(135)"/><rect x="-0.6" y="-9" width="1.2" height="2.6" fill="#9a9a9a" transform="rotate(180)"/><rect x="-0.6" y="-9" width="1.2" height="2.6" fill="#9a9a9a" transform="rotate(225)"/><rect x="-0.6" y="-9" width="1.2" height="2.6" fill="#9a9a9a" transform="rotate(270)"/><rect x="-0.6" y="-9" width="1.2" height="2.6" fill="#9a9a9a" transform="rotate(315)"/><circle r="5.4" fill="url(#kg9595)"/></g></svg>
<div class="t" style="left:125px;top:443.45px;font-size:14px;color:#000;transform:scaleX(0.9396);">OrientationAngle</div>
<div class="a" style="left:39px;top:475px;width:11px;height:1px;background:repeating-linear-gradient(90deg,#606060 0 1px,transparent 1px 2px)"></div>
<svg style="left:50px;top:466px" width="18" height="18" viewBox="0 0 18 18" ><g transform="rotate(-45 8.5 9)"><ellipse cx="6.07" cy="9.188" rx="5.13" ry="8.46" fill="#c4c4c4"/><ellipse cx="8.5" cy="9" rx="5.4" ry="9.4" fill="#4c4d48"/><ellipse cx="8.5" cy="9.47" rx="4.212000000000001" ry="7.5200000000000005" fill="#6f706c"/><ellipse cx="7.96" cy="4.77" rx="2.9700000000000006" ry="3.008" fill="#65662e"/><ellipse cx="8.5" cy="9.47" rx="2.7" ry="4.7" fill="#4a4a46"/><ellipse cx="8.5" cy="9.47" rx="1.5120000000000002" ry="2.6320000000000006" fill="#151510"/></g></svg>
<svg style="left:57px;top:463px" width="14" height="14" viewBox="0 0 14 14" ><rect x="1" y="1" width="12" height="12" rx="2.5" fill="#fff" stroke="#f07828" stroke-width="2"/><path d="M3 9 Q6 4 11 4 M3 11 Q7 7 11 7" stroke="#f07828" stroke-width="1.2" fill="none"/></svg>
<div class="t" style="left:77px;top:465.98px;font-size:14px;color:#000;transform:scaleX(0.9145);">RPC Presets</div>
<div class="a" style="left:39px;top:497px;width:11px;height:1px;background:repeating-linear-gradient(90deg,#606060 0 1px,transparent 1px 2px)"></div>
<div class="a" style="left:32px;top:492px;width:11px;height:11px;border:1px solid #919191;background:#fff"></div>
<div class="a" style="left:34px;top:497px;width:7px;height:1px;background:#000"></div>
<svg style="left:50px;top:489px" width="18" height="18" viewBox="0 0 18 18" ><g transform="rotate(-45 8.5 9)"><ellipse cx="6.07" cy="9.188" rx="5.13" ry="8.46" fill="#c4c4c4"/><ellipse cx="8.5" cy="9" rx="5.4" ry="9.4" fill="#4c4d48"/><ellipse cx="8.5" cy="9.47" rx="4.212000000000001" ry="7.5200000000000005" fill="#6f706c"/><ellipse cx="7.96" cy="4.77" rx="2.9700000000000006" ry="3.008" fill="#65662e"/><ellipse cx="8.5" cy="9.47" rx="2.7" ry="4.7" fill="#4a4a46"/><ellipse cx="8.5" cy="9.47" rx="1.5120000000000002" ry="2.6320000000000006" fill="#151510"/></g></svg>
<svg style="left:57px;top:486px" width="14" height="14" viewBox="0 0 14 14" ><rect x="0.5" y="0.5" width="13" height="13" rx="2" fill="#f2f2f2" stroke="#9a9a9a"/><text x="2.2" y="10" font-size="7.5" font-family="Liberation Sans" font-weight="bold" fill="#e8401a">FX</text></svg>
<div class="t" style="left:77px;top:488.51px;font-size:14px;color:#000;transform:scaleX(0.9473);">DSP Effect Path Presets</div>
<div class="a" style="left:63px;top:520px;width:11px;height:1px;background:repeating-linear-gradient(90deg,#606060 0 1px,transparent 1px 2px)"></div>
<svg style="left:74px;top:509px" width="20" height="20" viewBox="0 0 20 20" ><circle cx="8" cy="12" r="7" fill="#d8d8d8" stroke="#aaa"/><rect x="7" y="1" width="12" height="12" rx="2" fill="#eee" stroke="#999"/><text x="8.5" y="10" font-size="6.5" font-family="Liberation Sans" font-weight="bold" fill="#e03010">FX</text></svg>
<div class="t" style="left:101px;top:511.04px;font-size:14px;color:#000;transform:scaleX(0.9291);">Global</div>
<div class="a" style="left:39px;top:542px;width:11px;height:1px;background:repeating-linear-gradient(90deg,#606060 0 1px,transparent 1px 2px)"></div>
<svg style="left:50px;top:534px" width="18" height="18" viewBox="0 0 18 18" ><g transform="rotate(-45 8.5 9)"><ellipse cx="6.07" cy="9.188" rx="5.13" ry="8.46" fill="#c4c4c4"/><ellipse cx="8.5" cy="9" rx="5.4" ry="9.4" fill="#4c4d48"/><ellipse cx="8.5" cy="9.47" rx="4.212000000000001" ry="7.5200000000000005" fill="#6f706c"/><ellipse cx="7.96" cy="4.77" rx="2.9700000000000006" ry="3.008" fill="#65662e"/><ellipse cx="8.5" cy="9.47" rx="2.7" ry="4.7" fill="#4a4a46"/><ellipse cx="8.5" cy="9.47" rx="1.5120000000000002" ry="2.6320000000000006" fill="#151510"/></g></svg>
<svg style="left:58px;top:533px" width="12" height="18" viewBox="0 0 12 18" ><path d="M2.5 1 L2.5 5 L7 5 Q10 5 10 8 L10 17" stroke="#7a2525" stroke-width="2.4" fill="none"/><path d="M1 1.2 L9 1.2" stroke="#888" stroke-width="1.2"/></svg>
<div class="t" style="left:77px;top:533.57px;font-size:14px;color:#000;transform:scaleX(0.9116);">Compression Presets</div>
<div class="a" style="left:1px;top:544px;width:470px;height:7px;background:#fff"></div>
<div class="a" style="left:1px;top:544px;width:468px;height:1px;background:#f4f4f4"></div>
<div class="a" style="left:1px;top:551px;width:470px;height:1px;background:#a0a0a0"></div>
<div class="a" style="left:1px;top:551px;width:1px;height:301px;background:#a0a0a0"></div>
<div class="a" style="left:2px;top:552px;width:469px;height:1px;background:#696969"></div>
<div class="a" style="left:2px;top:552px;width:1px;height:300px;background:#696969"></div>
<div class="a" style="left:3px;top:553px;width:445px;height:299px;background:#f0f0f0"></div>
<div class="a" style="left:448px;top:553px;width:21px;height:299px;background:#f0f0f0"></div>
<div class="a" style="left:449px;top:574px;width:18px;height:183px;background:#cdcdcd"></div>
<svg style="left:452px;top:561px" width="11" height="7" viewBox="0 0 11 7" ><path d="M1 6 L5.5 1.5 L10 6" stroke="#606060" stroke-width="2" fill="none"/></svg>
<svg style="left:452px;top:837px" width="11" height="7" viewBox="0 0 11 7" ><path d="M1 1 L5.5 5.5 L10 1" stroke="#606060" stroke-width="2" fill="none"/></svg>
<div class="a" style="left:469px;top:551px;width:2px;height:303px;background:#fff"></div>
<div class="a" style="left:16px;top:572px;width:324px;height:222px;border:1px solid #a0a0a0;box-shadow:inset 1px 1px 0 #fff, 1px 1px 0 #fff"></div>
<div class="a" style="left:26px;top:566px;width:56px;height:12px;background:#f0f0f0"></div>
<div class="t" style="left:29.1px;top:567.20px;font-size:14px;;transform:scaleX(0.9757);">General</div>
<div class="t" style="left:29.7px;top:586.93px;font-size:11.5px;;transform:scaleX(1.0102);">Name</div>
<div class="a" style="left:28.6px;top:599.4px;width:270px;height:23.5px;background:#fff;border:1px solid;border-color:#6a6a6a #7a7a7a #7a7a7a #6a6a6a;box-shadow:inset 1px 1px 0 #a8a8a8"></div>
<div class="t" style="left:31px;top:603.58px;font-size:12.5px;;transform:scaleX(1.0150);">Wave Bank 1</div>
<div class="t" style="left:29.7px;top:626.83px;font-size:11.5px;;transform:scaleX(1.0317);">Notes</div>
<div class="a" style="left:28.6px;top:639.3px;width:270px;height:23.5px;background:#fff;border:1px solid;border-color:#6a6a6a #7a7a7a #7a7a7a #6a6a6a;box-shadow:inset 1px 1px 0 #a8a8a8"></div>
<div class="a" style="left:303.6px;top:638.5px;width:24.5px;height:24.5px;background:#f0f0f0;border:1px solid;border-color:#fff #696969 #696969 #fff;box-shadow:inset -1px -1px 0 #a0a0a0"></div>
<div class="t" style="left:310px;top:645.65px;font-size:11px;color:#000;">...</div>
<div class="a" style="left:29.1px;top:673px;width:188px;height:40px;border:1px solid #a0a0a0;box-shadow:inset 1px 1px 0 #fff, 1px 1px 0 #fff"></div>
<div class="a" style="left:36px;top:667px;width:32px;height:10px;background:#f0f0f0"></div>
<div class="t" style="left:39.9px;top:668.43px;font-size:11.5px;;transform:scaleX(1.0025);">Type</div>
<div class="a" style="left:33.7px;top:683px;width:87px;height:22px;border-radius:11px;background:radial-gradient(ellipse at 50% 50%,#30ff70 0%,#10e040 55%,#08b028 100%);border:1px solid #0a8a18"></div>
<div class="t" style="left:48px;top:688.23px;font-size:11.5px;color:#063a06;transform:scaleX(1.0308);">In Memory</div>
<div class="a" style="left:126.3px;top:683px;width:87px;height:22px;border-radius:11px;background:radial-gradient(ellipse at 50% 50%,#a4c0a0 0%,#90a88c 55%,#708a6c 100%);border:1px solid #2a7a2a"></div>
<div class="t" style="left:143px;top:688.23px;font-size:11.5px;color:#3a5a3a;transform:scaleX(1.0301);">Streaming</div>
<div class="t" style="left:232px;top:673.23px;font-size:11.5px;;transform:scaleX(0.9385);">Size</div>
<div class="a" style="left:231.2px;top:685.7px;width:72px;height:23.5px;background:#f0f0f0;border:1px solid;border-color:#6a6a6a #7a7a7a #7a7a7a #6a6a6a;box-shadow:inset 1px 1px 0 #a8a8a8"></div>
<div class="t" style="left:233.4px;top:690.77px;font-size:12.5px;;transform:scaleX(1.0523);">2,65 MB</div>
<div class="a" style="left:29.7px;top:720px;width:13.5px;height:13px;border:1px solid #333;background:#fff"></div>
<div class="t" style="left:48px;top:721.77px;font-size:12.5px;;transform:scaleX(1.0019);">Friendly Names</div>
<div class="a" style="left:170px;top:720px;width:13.5px;height:13px;border:1px solid #333;background:#fff"></div>
<svg style="left:171px;top:716px" width="15" height="16" viewBox="0 0 15 16" ><path d="M2.5 8 L6 12.5 L13.5 1.5" stroke="#000" stroke-width="2.8" fill="none"/></svg>
<div class="t" style="left:187.5px;top:721.77px;font-size:12.5px;;transform:scaleX(1.0249);">Sync In-Game Data</div>
<div class="t" style="left:29.7px;top:743.47px;font-size:9.8px;;transform:scaleX(1.0026);">Compression Preset</div>
<div class="a" style="left:28.6px;top:754.5px;width:268px;height:24.5px;background:#fff;border:1px solid;border-color:#6a6a6a #7a7a7a #7a7a7a #6a6a6a;box-shadow:inset 1px 1px 0 #a8a8a8"></div>
<div class="a" style="left:274.7px;top:757px;width:20.8px;height:20px;background:#f0f0f0;border:1px solid;border-color:#fff #696969 #696969 #fff"></div>
<svg style="left:280px;top:765px" width="10" height="6" viewBox="0 0 10 6" ><path d="M0 0 L10 0 L5 5 Z" fill="#000"/></svg>
<div class="t" style="left:33.7px;top:761.55px;font-size:13px;;transform:scaleX(0.9975);">&lt;none&gt;</div>
<div class="a" style="left:16px;top:815px;width:324px;height:50px;border:1px solid #a0a0a0;box-shadow:inset 1px 1px 0 #fff"></div>
<div class="a" style="left:26px;top:808px;width:44px;height:14px;background:#f0f0f0"></div>
<div class="t" style="left:29.1px;top:809.50px;font-size:14px;;transform:scaleX(0.9215);">Paths</div>
<div class="t" style="left:29.7px;top:829.73px;font-size:11.5px;;transform:scaleX(0.9910);">Header Path</div>
<div class="a" style="left:28.6px;top:842.2px;width:270px;height:23.5px;background:#fff;border:1px solid;border-color:#6a6a6a #7a7a7a #7a7a7a #6a6a6a;box-shadow:inset 1px 1px 0 #a8a8a8"></div>
<div class="a" style="left:303.6px;top:842px;width:24.5px;height:24.5px;background:#f0f0f0;border:1px solid;border-color:#fff #696969 #696969 #fff"></div>
<div class="a" style="left:3px;top:852px;width:468px;height:2px;background:#fff"></div>
<div class="a" style="left:477px;top:99px;width:818px;height:1px;background:#a0a0a0"></div>
<div class="a" style="left:477px;top:99px;width:1px;height:753px;background:#a0a0a0"></div>
<div class="a" style="left:478px;top:100px;width:817px;height:1px;background:#696969"></div>
<div class="a" style="left:478px;top:100px;width:1px;height:752px;background:#696969"></div>
<div class="a" style="left:479px;top:101px;width:814px;height:751px;background:#ababab"></div>
<div class="a" style="left:1293px;top:99px;width:1px;height:755px;background:#dcdcdc"></div>
<div class="a" style="left:1294px;top:99px;width:2px;height:755px;background:#f6f6f6"></div>
<div class="a" style="left:477px;top:852px;width:818px;height:2px;background:#fff"></div>
<div class="a" style="left:486px;top:116px;width:801px;height:281px;border:1px solid #1a1a1a;border-top:2px solid #606060;border-radius:7px 7px 0 0;background:#b9d1ea"></div>
<div class="a" style="left:487px;top:118px;width:799px;height:39px;border-radius:5px 5px 0 0;background:linear-gradient(#99b4d1,#b6cde8);border-top:1px solid #fff;border-left:1px solid rgba(255,255,255,0.6)"></div>
<div class="a" style="left:487px;top:395px;width:799px;height:1px;background:#3ac8e0"></div>
<svg style="left:498px;top:132px" width="18" height="18" viewBox="0 0 18 18" ><g transform="rotate(-45 8.5 9)"><ellipse cx="6.07" cy="9.188" rx="5.13" ry="8.46" fill="#c4c4c4"/><ellipse cx="8.5" cy="9" rx="5.4" ry="9.4" fill="#4c4d48"/><ellipse cx="8.5" cy="9.47" rx="4.212000000000001" ry="7.5200000000000005" fill="#6f706c"/><ellipse cx="7.96" cy="4.77" rx="2.9700000000000006" ry="3.008" fill="#65662e"/><ellipse cx="8.5" cy="9.47" rx="2.7" ry="4.7" fill="#4a4a46"/><ellipse cx="8.5" cy="9.47" rx="1.5120000000000002" ry="2.6320000000000006" fill="#151510"/></g></svg>
<svg style="left:504px;top:129px" width="15" height="15" viewBox="0 0 15 15" ><rect x="1" y="1" width="13" height="13" rx="2.5" fill="#fdf3ee" stroke="#f7893a" stroke-width="2"/><path d="M3 3.5 L7.5 8 L12 3.5 M3 12 L7.5 8 L12 12" stroke="#e8a0a0" stroke-width="1" fill="none"/><path d="M3 12.5 Q7.5 7 12 12.5 Z" fill="#dedede"/></svg>
<div class="t" style="left:524px;top:133.50px;font-size:15.3px;;transform:scaleX(0.9260);">Wave Bank 1 (Wave Bank)</div>
<div class="a" style="left:1150.4px;top:129.5px;width:39px;height:22px;border-radius:3px;background:linear-gradient(#cadaee 0,#c2d4ea 45%,#a8c0dc 50%,#b8cde6 100%);border:1px solid #6e809a;box-shadow:inset 0 0 0 1px rgba(255,255,255,0.45)"></div>
<div class="a" style="left:1192.6000000000001px;top:129.5px;width:39px;height:22px;border-radius:3px;background:linear-gradient(#cadaee 0,#c2d4ea 45%,#a8c0dc 50%,#b8cde6 100%);border:1px solid #6e809a;box-shadow:inset 0 0 0 1px rgba(255,255,255,0.45)"></div>
<div class="a" style="left:1235.0px;top:129.5px;width:39px;height:22px;border-radius:3px;background:linear-gradient(#e9a899 0,#e39a88 45%,#c8482a 50%,#d86e52 100%);border:1px solid #6a3a3a;box-shadow:inset 0 0 0 1px rgba(255,255,255,0.45)"></div>
<div class="a" style="left:1162.4px;top:140.0px;width:14px;height:6px;background:#f4f4f4;border:1.5px solid #3a3a4a;border-radius:2px"></div>
<div class="a" style="left:1205.1000000000001px;top:134.0px;width:14px;height:12px;background:#f4f4f4;border:1.5px solid #3a3a4a;border-radius:1px"></div>
<div class="a" style="left:1208.6000000000001px;top:137.0px;width:7px;height:4px;background:#8aa4c8;border:1px solid #3a3a4a"></div>
<svg style="left:1247.5px;top:134.5px" width="14" height="11" viewBox="0 0 14 11" ><path d="M2.5 2 L11.5 9 M11.5 2 L2.5 9" stroke="#4a2a2a" stroke-width="4.4" stroke-linecap="round"/><path d="M2.5 2 L11.5 9 M11.5 2 L2.5 9" stroke="#fafafa" stroke-width="2.4" stroke-linecap="round"/></svg>
<div class="a" style="left:496px;top:155px;width:781px;height:204px;background:#fff;border:2px solid;border-color:#a0a0a0 #fff #fff #a0a0a0"></div>
<div class="a" style="left:497px;top:156px;width:779px;height:202px;border:1px solid;border-color:#696969 #e3e3e3 #e3e3e3 #696969"></div>
<div class="a" style="left:498px;top:157px;width:777px;height:22px;background:#f0f0f0"></div>
<div class="a" style="left:498px;top:157px;width:118.5px;height:22px;background:#f0f0f0;border:1px solid;border-color:#fff #696969 #696969 #fff;box-shadow:inset -1px -1px 0 #a0a0a0"></div>
<div class="t" style="left:506.3px;top:161.10px;font-size:14px;;transform:scaleX(0.9101);">Name</div>
<div class="a" style="left:615.5px;top:157px;width:76.5px;height:22px;background:#f0f0f0;border:1px solid;border-color:#fff #696969 #696969 #fff;box-shadow:inset -1px -1px 0 #a0a0a0"></div>
<div class="t" style="left:623.8px;top:161.10px;font-size:14px;;transform:scaleX(0.9730);">Size</div>
<div class="a" style="left:691px;top:157px;width:76.5px;height:22px;background:#f0f0f0;border:1px solid;border-color:#fff #696969 #696969 #fff;box-shadow:inset -1px -1px 0 #a0a0a0"></div>
<div class="t" style="left:699.3px;top:161.10px;font-size:14px;;transform:scaleX(0.8894);">PC Format</div>
<div class="a" style="left:766.5px;top:157px;width:77px;height:22px;background:#f0f0f0;border:1px solid;border-color:#fff #696969 #696969 #fff;box-shadow:inset -1px -1px 0 #a0a0a0"></div>
<div class="t" style="left:774.8px;top:161.10px;font-size:14px;;transform:scaleX(0.9115);">PC Quality</div>
<div class="a" style="left:842.5px;top:157px;width:110px;height:22px;background:#f0f0f0;border:1px solid;border-color:#fff #696969 #696969 #fff;box-shadow:inset -1px -1px 0 #a0a0a0"></div>
<div class="t" style="left:850.8px;top:161.10px;font-size:14px;;transform:scaleX(0.9153);">PC Compressed</div>
<div class="a" style="left:951.5px;top:157px;width:68.5px;height:22px;background:#f0f0f0;border:1px solid;border-color:#fff #696969 #696969 #fff;box-shadow:inset -1px -1px 0 #a0a0a0"></div>
<div class="t" style="left:959.8px;top:161.10px;font-size:14px;;transform:scaleX(0.9191);">PC Ratio</div>
<div class="a" style="left:1019px;top:157px;width:76px;height:22px;background:#f0f0f0;border:1px solid;border-color:#fff #696969 #696969 #fff;box-shadow:inset -1px -1px 0 #a0a0a0"></div>
<div class="t" style="left:1027.3px;top:161.10px;font-size:14px;;transform:scaleX(0.8951);">Xb Format</div>
<div class="a" style="left:1094px;top:157px;width:90px;height:22px;background:#f0f0f0;border:1px solid;border-color:#fff #696969 #696969 #fff;box-shadow:inset -1px -1px 0 #a0a0a0"></div>
<div class="t" style="left:1102.3px;top:161.10px;font-size:14px;;transform:scaleX(0.9235);">Xbox Quality</div>
<div class="a" style="left:1183px;top:157px;width:92px;height:22px;background:#f0f0f0;border:1px solid;border-color:#fff #696969 #696969 #fff;box-shadow:inset -1px -1px 0 #a0a0a0"></div>
<div class="t" style="left:1191.3px;top:161.10px;font-size:14px;;transform:scaleX(0.9029);">Xb Compresse</div>
<svg style="left:501px;top:181.8px" width="20" height="19" viewBox="0 0 20 19" ><path d="M4.5 0.5 L15 0.5 L19.5 5 L19.5 18.5 L4.5 18.5 Z" fill="#9ccc00" stroke="#8a8a8a" stroke-width="0.9"/><path d="M15 0.5 L15 5 L19.5 5 Z" fill="#d4d4d4" stroke="#8a8a8a" stroke-width="0.6"/><path d="M0.5 9.5 Q1 4 5 2 L7.5 2 L7.5 17 L5 17 Q1 15 0.5 9.5 Z" fill="#9a9a9a"/><ellipse cx="6" cy="9.5" rx="2.3" ry="6.2" fill="#555"/><ellipse cx="5.6" cy="9.5" rx="1.1" ry="2.2" fill="#111"/></svg>
<div class="t" style="left:524.8px;top:184.30px;font-size:15.3px;color:#ff1010;font-style:italic;transform:scaleX(0.8968);">PinkPanther60</div>
<div class="t" style="left:623.5px;top:184.30px;font-size:15.3px;color:#ff1010;font-style:italic;transform:scaleX(0.8918);">2 646 000</div>
<div class="t" style="left:699.8px;top:184.30px;font-size:15.3px;color:#ff1010;font-style:italic;transform:scaleX(0.9118);">PCM</div>
<div class="t" style="left:777px;top:184.30px;font-size:15.3px;color:#ff1010;font-style:italic;transform:scaleX(0.9204);">100</div>
<div class="t" style="left:852px;top:184.30px;font-size:15.3px;color:#ff1010;font-style:italic;transform:scaleX(0.8918);">2 646 000</div>
<div class="t" style="left:962px;top:184.30px;font-size:15.3px;color:#ff1010;font-style:italic;transform:scaleX(0.8179);">100%</div>
<div class="t" style="left:1027.9px;top:184.30px;font-size:15.3px;color:#ff1010;font-style:italic;transform:scaleX(0.9118);">PCM</div>
<div class="t" style="left:1105px;top:184.30px;font-size:15.3px;color:#ff1010;font-style:italic;transform:scaleX(0.9204);">100</div>
<div class="t" style="left:1191.3px;top:184.30px;font-size:15.3px;color:#ff1010;font-style:italic;transform:scaleX(0.8918);">2 646 000</div>
<svg style="left:501px;top:202.4px" width="20" height="19" viewBox="0 0 20 19" ><path d="M4.5 0.5 L15 0.5 L19.5 5 L19.5 18.5 L4.5 18.5 Z" fill="#9ccc00" stroke="#8a8a8a" stroke-width="0.9"/><path d="M15 0.5 L15 5 L19.5 5 Z" fill="#d4d4d4" stroke="#8a8a8a" stroke-width="0.6"/><path d="M0.5 9.5 Q1 4 5 2 L7.5 2 L7.5 17 L5 17 Q1 15 0.5 9.5 Z" fill="#9a9a9a"/><ellipse cx="6" cy="9.5" rx="2.3" ry="6.2" fill="#555"/><ellipse cx="5.6" cy="9.5" rx="1.1" ry="2.2" fill="#111"/></svg>
<div class="t" style="left:524.8px;top:204.90px;font-size:15.3px;color:#ff1010;font-style:italic;transform:scaleX(0.8613);">StarWars3</div>
<div class="t" style="left:623.5px;top:204.90px;font-size:15.3px;color:#ff1010;font-style:italic;transform:scaleX(0.8861);">132 300</div>
<div class="t" style="left:699.8px;top:204.90px;font-size:15.3px;color:#ff1010;font-style:italic;transform:scaleX(0.9118);">PCM</div>
<div class="t" style="left:777px;top:204.90px;font-size:15.3px;color:#ff1010;font-style:italic;transform:scaleX(0.9204);">100</div>
<div class="t" style="left:852px;top:204.90px;font-size:15.3px;color:#ff1010;font-style:italic;transform:scaleX(0.8861);">132 300</div>
<div class="t" style="left:962px;top:204.90px;font-size:15.3px;color:#ff1010;font-style:italic;transform:scaleX(0.8179);">100%</div>
<div class="t" style="left:1027.9px;top:204.90px;font-size:15.3px;color:#ff1010;font-style:italic;transform:scaleX(0.9118);">PCM</div>
<div class="t" style="left:1105px;top:204.90px;font-size:15.3px;color:#ff1010;font-style:italic;transform:scaleX(0.9204);">100</div>
<div class="t" style="left:1191.3px;top:204.90px;font-size:15.3px;color:#ff1010;font-style:italic;transform:scaleX(0.8861);">132 300</div>
<div class="a" style="left:498px;top:338px;width:777px;height:19px;background:#f0f0f0"></div>
<div class="a" style="left:520px;top:338px;width:417px;height:19px;background:#cdcdcd"></div>
<svg style="left:505px;top:343px" width="7" height="11" viewBox="0 0 7 11" ><path d="M6 1 L1.5 5.5 L6 10" stroke="#606060" stroke-width="2" fill="none"/></svg>
<svg style="left:1261px;top:343px" width="7" height="11" viewBox="0 0 7 11" ><path d="M1 1 L5.5 5.5 L1 10" stroke="#606060" stroke-width="2" fill="none"/></svg>
<div class="a" style="left:496px;top:359px;width:781px;height:28px;background:#f0f0f0"></div>
<div class="a" style="left:496px;top:359px;width:781px;height:3px;background:#f8f8f8"></div>
<div class="a" style="left:496px;top:363px;width:143px;height:1px;background:#a0a0a0"></div>
<div class="a" style="left:496px;top:363px;width:1px;height:24px;background:#a0a0a0"></div>
<div class="a" style="left:639px;top:363px;width:1px;height:24px;background:#fafafa"></div>
<div class="t" style="left:498.3px;top:368.30px;font-size:14px;;transform:scaleX(0.9698);">2 Waves (2 unused)</div>
<div class="a" style="left:1285px;top:160px;width:1px;height:236px;background:#3ac8e0"></div>
<svg style="left:1262px;top:373px" width="13" height="13" viewBox="0 0 13 13" ><path d="M12 1 L1 12 M12 6 L6 12 M12 10.5 L10.5 12" stroke="#a0a0a0" stroke-width="1.4"/></svg>
<div class="a" style="left:496px;top:412px;width:742px;height:396px;border:1px solid #555;border-top:1px solid #5a5a5a;border-radius:7px 7px 0 0;background:#d7e4f2"></div>
<div class="a" style="left:497px;top:413px;width:740px;height:40px;border-radius:6px 6px 0 0;background:linear-gradient(#bfcfdf,#d6e3f1);border-top:1px solid #e4e8f0;border-left:1px solid rgba(255,255,255,0.5)"></div>
<div class="a" style="left:1236px;top:420px;width:1px;height:387px;background:#f4f8fc"></div>
<div class="a" style="left:497px;top:806px;width:740px;height:1px;background:#f4f8fc"></div>
<svg style="left:507px;top:428px" width="18" height="18" viewBox="0 0 18 18" ><g transform="rotate(-45 8.5 9)"><ellipse cx="6.07" cy="9.188" rx="5.13" ry="8.46" fill="#c4c4c4"/><ellipse cx="8.5" cy="9" rx="5.4" ry="9.4" fill="#4c4d48"/><ellipse cx="8.5" cy="9.47" rx="4.212000000000001" ry="7.5200000000000005" fill="#6f706c"/><ellipse cx="7.96" cy="4.77" rx="2.9700000000000006" ry="3.008" fill="#65662e"/><ellipse cx="8.5" cy="9.47" rx="2.7" ry="4.7" fill="#4a4a46"/><ellipse cx="8.5" cy="9.47" rx="1.5120000000000002" ry="2.6320000000000006" fill="#151510"/></g></svg>
<svg style="left:513px;top:424px" width="16" height="16" viewBox="0 0 16 16" ><rect x="1" y="1" width="14" height="14" rx="2.5" fill="#eef0f4" stroke="#f58a40" stroke-width="2"/><path d="M3 13 L13 3 L13 13 Z" fill="#d8d8d8" opacity="0.6"/><ellipse cx="6.5" cy="10.5" rx="2.6" ry="1.9" transform="rotate(-30 6.5 10.5)" fill="#f46a10"/><path d="M8.8 10 L8.8 3 Q10 5 12 5.5" stroke="#f46a10" stroke-width="1.3" fill="none"/></svg>
<div class="t" style="left:533.4px;top:428.69px;font-size:15.3px;color:#8c8c8c;transform:scaleX(0.9386);">Sound Bank 1 (Sound Bank)</div>
<div class="a" style="left:1101px;top:424.5px;width:39px;height:22px;border-radius:3px;background:linear-gradient(#cadaee 0,#c2d4ea 45%,#a8c0dc 50%,#b8cde6 100%);border:1px solid #6e809a;box-shadow:inset 0 0 0 1px rgba(255,255,255,0.45)"></div>
<div class="a" style="left:1143.2px;top:424.5px;width:39px;height:22px;border-radius:3px;background:linear-gradient(#cadaee 0,#c2d4ea 45%,#a8c0dc 50%,#b8cde6 100%);border:1px solid #6e809a;box-shadow:inset 0 0 0 1px rgba(255,255,255,0.45)"></div>
<div class="a" style="left:1185.6px;top:424.5px;width:39px;height:22px;border-radius:3px;background:linear-gradient(#cadaee 0,#c2d4ea 45%,#a8c0dc 50%,#b8cde6 100%);border:1px solid #6e809a;box-shadow:inset 0 0 0 1px rgba(255,255,255,0.45)"></div>
<div class="a" style="left:1114px;top:435.0px;width:14px;height:6px;background:#e8eef6;border:1.5px solid #4a5060;border-radius:2px"></div>
<div class="a" style="left:1155.7px;top:429.0px;width:14px;height:12px;background:#e8eef6;border:1.5px solid #4a5060;border-radius:1px"></div>
<div class="a" style="left:1159.2px;top:432.0px;width:7px;height:4px;background:#c8d8ea;border:1px solid #4a5060"></div>
<svg style="left:1198.1px;top:429.5px" width="14" height="11" viewBox="0 0 14 11" ><path d="M2.5 2 L11.5 9 M11.5 2 L2.5 9" stroke="#5a6070" stroke-width="4.2" stroke-linecap="round"/><path d="M2.5 2 L11.5 9 M11.5 2 L2.5 9" stroke="#e8eef6" stroke-width="2.2" stroke-linecap="round"/></svg>
<div class="a" style="left:505px;top:451px;width:723px;height:348px;background:#f0f0f0"></div>
<div class="a" style="left:506px;top:451px;width:529px;height:208px;background:#fff;border:1px solid;border-color:#a0a0a0 #fff #fff #a0a0a0"></div>
<div class="a" style="left:507px;top:452px;width:527px;height:206px;border:1px solid;border-color:#696969 #e3e3e3 #e3e3e3 #696969"></div>
<div class="a" style="left:508px;top:453px;width:250px;height:21px;background:#f0f0f0;border:1px solid;border-color:#fff #696969 #696969 #fff;box-shadow:inset -1px -1px 0 #a0a0a0"></div>
<div class="t" style="left:516px;top:456.60px;font-size:14px;;transform:scaleX(0.9300);">Sound Name</div>
<div class="a" style="left:758px;top:453px;width:67px;height:21px;background:#f0f0f0;border:1px solid;border-color:#fff #696969 #696969 #fff;box-shadow:inset -1px -1px 0 #a0a0a0"></div>
<div class="t" style="left:766px;top:456.60px;font-size:14px;;transform:scaleX(0.9681);">Category</div>
<div class="a" style="left:825px;top:453px;width:54px;height:21px;background:#f0f0f0;border:1px solid;border-color:#fff #696969 #696969 #fff;box-shadow:inset -1px -1px 0 #a0a0a0"></div>
<div class="t" style="left:833px;top:456.60px;font-size:14px;;transform:scaleX(0.9182);">Priority</div>
<div class="a" style="left:879px;top:453px;width:60px;height:21px;background:#f0f0f0;border:1px solid;border-color:#fff #696969 #696969 #fff;box-shadow:inset -1px -1px 0 #a0a0a0"></div>
<div class="t" style="left:887px;top:456.60px;font-size:14px;;transform:scaleX(0.9741);">Options</div>
<div class="a" style="left:939px;top:453px;width:94px;height:21px;background:#f0f0f0;border:1px solid;border-color:#fff #696969 #696969 #fff;box-shadow:inset -1px -1px 0 #a0a0a0"></div>
<div class="t" style="left:947px;top:456.60px;font-size:14px;;transform:scaleX(0.9569);">Notes</div>
<div class="a" style="left:531px;top:476px;width:502px;height:22px;background:#eeeeee"></div>
<svg style="left:512px;top:478px" width="18" height="19" viewBox="0 0 18 19" ><rect x="1" y="1" width="16" height="17" rx="2.5" fill="#fff3ea" stroke="#f07828" stroke-width="1.6"/><path d="M4 5 L4 15 M7 4 L7 15 M7 9 L11 9 Q14 9 14 12" stroke="#f07828" stroke-width="1.2" fill="none"/></svg>
<div class="t" style="left:534.2px;top:479.12px;font-size:15.5px;font-style:italic;transform:scaleX(0.8735);">New Sound</div>
<div class="t" style="left:766.7px;top:479.12px;font-size:15.5px;font-style:italic;transform:scaleX(0.8550);">Default</div>
<div class="t" style="left:833.8px;top:479.12px;font-size:15.5px;font-style:italic;transform:scaleX(0.9275);">0</div>
<div class="a" style="left:1040px;top:451px;width:167px;height:208px;background:#fff;border:1px solid;border-color:#a0a0a0 #fff #fff #a0a0a0"></div>
<div class="a" style="left:1041px;top:452px;width:165px;height:206px;border:1px solid;border-color:#696969 #e3e3e3 #e3e3e3 #696969"></div>
<div class="a" style="left:1052px;top:463px;width:15px;height:1px;background:repeating-linear-gradient(90deg,#606060 0 1px,transparent 1px 2px)"></div>
<svg style="left:1067px;top:453px" width="19" height="19" viewBox="0 0 19 19" ><rect x="1" y="1" width="17" height="17" rx="3" fill="#fff" stroke="#f07828" stroke-width="1.8"/><rect x="3" y="5" width="13" height="9" fill="#8a8a8a"/><path d="M4 8 h3 M9 8 h5 M5 11 h4 M10 11 h3" stroke="#ddd" stroke-width="1"/></svg>
<div class="a" style="left:1090px;top:454px;width:51px;height:20px;background:#eeeeee"></div>
<div class="t" style="left:1093px;top:457.10px;font-size:14px;;transform:scaleX(0.9749);">Track 1</div>
<div class="a" style="left:1035px;top:451px;width:1px;height:348px;background:#fff"></div>
<div class="a" style="left:506px;top:665px;width:529px;height:134px;background:#fff;border:1px solid;border-color:#a0a0a0 #fff #fff #a0a0a0"></div>
<div class="a" style="left:507px;top:666px;width:527px;height:132px;border:1px solid;border-color:#696969 #e3e3e3 #e3e3e3 #696969"></div>
<div class="a" style="left:508px;top:667px;width:250px;height:21px;background:#f0f0f0;border:1px solid;border-color:#fff #696969 #696969 #fff;box-shadow:inset -1px -1px 0 #a0a0a0"></div>
<div class="a" style="left:758px;top:667px;width:275px;height:21px;background:#f0f0f0;border:1px solid;border-color:#fff #696969 #696969 #fff;box-shadow:inset -1px -1px 0 #a0a0a0"></div>
<div class="t" style="left:515.1px;top:670.10px;font-size:14px;;transform:scaleX(0.9414);">Cue Name</div>
<div class="t" style="left:766.2px;top:670.10px;font-size:14px;;transform:scaleX(0.9569);">Notes</div>
<div class="a" style="left:1040px;top:665px;width:167px;height:134px;background:#fff;border:1px solid;border-color:#a0a0a0 #fff #fff #a0a0a0"></div>
<div class="a" style="left:1041px;top:666px;width:165px;height:132px;border:1px solid;border-color:#696969 #e3e3e3 #e3e3e3 #696969"></div>
<div class="a" style="left:1042px;top:667px;width:163px;height:21px;background:#f0f0f0"></div>
<div class="a" style="left:1207px;top:451px;width:21px;height:348px;background:#f0f0f0"></div>
<div class="a" style="left:1208.5px;top:472px;width:18.5px;height:283px;background:#cdcdcd"></div>
<svg style="left:1212px;top:459px" width="11" height="7" viewBox="0 0 11 7" ><path d="M1 6 L5.5 1.5 L10 6" stroke="#606060" stroke-width="2" fill="none"/></svg>
<svg style="left:1212px;top:783px" width="11" height="7" viewBox="0 0 11 7" ><path d="M1 1 L5.5 5.5 L10 1" stroke="#606060" stroke-width="2" fill="none"/></svg>
<div class="a" style="left:1px;top:854px;width:1295px;height:31px;background:#f0f0f0"></div>
<div class="a" style="left:1px;top:885px;width:1295px;height:1px;background:#a0a0a0"></div>
<svg style="left:5px;top:862px" width="18" height="18" viewBox="0 0 18 18" ><defs><linearGradient id="gb" x1="0" y1="0" x2="1" y2="1"><stop offset="0" stop-color="#2a9a3a"/><stop offset="0.45" stop-color="#1e9030"/><stop offset="1" stop-color="#90d880"/></linearGradient></defs><path d="M5 0.5 L13 0.5 L17.5 5 L17.5 13 L13 17.5 L5 17.5 L0.5 13 L0.5 5 Z" fill="url(#gb)"/><circle cx="5.5" cy="5" r="2.5" fill="#6cc070" opacity="0.6"/></svg>
<div class="t" style="left:28.3px;top:863.73px;font-size:15.5px;;transform:scaleX(0.8591);">Ready</div>
<svg style="left:1280px;top:869px" width="14" height="14" viewBox="0 0 14 14" ><path d="M13 2 L2 13 M13 7 L7 13 M13 11.5 L11.5 13" stroke="#a0a0a0" stroke-width="1.6"/><path d="M13.5 3.5 L3.5 13.5 M13.5 8.5 L8.5 13.5" stroke="#fff" stroke-width="0.8"/></svg></body></html>
